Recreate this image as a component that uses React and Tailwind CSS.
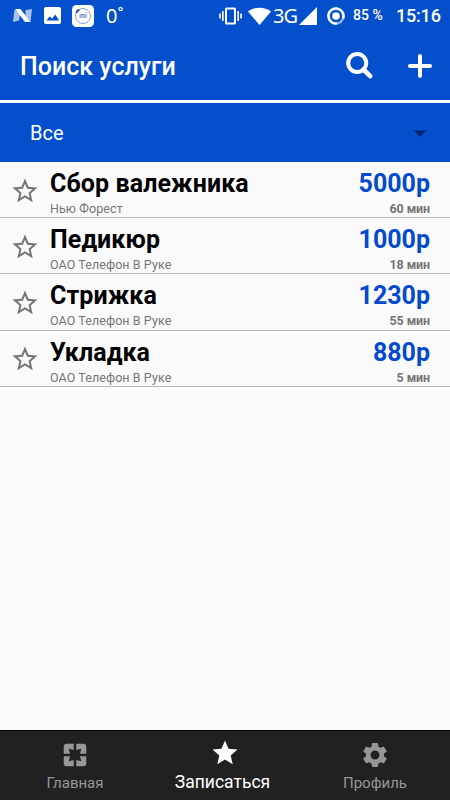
import React, { useState } from 'react';
import { MdPages, MdStar, MdStarBorder, MdSettings, MdArrowDropDown } from 'react-icons/md';

const services = [
    { id: 1, name: 'Сбор валежника', company: 'Нью Форест', price: 5000, duration: 60 },
    { id: 2, name: 'Педикюр', company: 'ОАО Телефон В Руке', price: 1000, duration: 18 },
    { id: 3, name: 'Стрижка', company: 'ОАО Телефон В Руке', price: 1230, duration: 55 },
    { id: 4, name: 'Укладка', company: 'ОАО Телефон В Руке', price: 880, duration: 5 },
];

const tabs = [
    { id: 'home', label: 'Главная', Icon: MdPages },
    { id: 'book', label: 'Записаться', Icon: MdStar },
    { id: 'profile', label: 'Профиль', Icon: MdSettings },
];

const StatusBar = () => (
    <div className="flex h-[31px] shrink-0 items-center pl-[13px] pr-[10px] text-white">
        <svg className="h-[15px] w-[19px]" viewBox="0 0 19 15">
            <path d="M0 14L1.500 1.500l5.500 5-1 6zM12.500 2.200l6.500-1.200-1.500 13-5-6z" fill="#a9c2ee" />
            <path d="M2 1h5.500l10 13H12z" fill="white" />
        </svg>
        <svg className="ml-3 h-[17px] w-[17px]" viewBox="0 0 17 17">
            <rect width="17" height="17" rx="2" fill="white" />
            <path d="M2.500 13.500l3.200-4.300 2.400 2.500 3.200-4.200 3.800 6z" fill="#044fcb" />
        </svg>
        <svg className="ml-[11px] h-[22px] w-[22px]" viewBox="0 0 22 22">
            <rect width="22" height="22" rx="4.5" fill="white" />
            <circle cx="11" cy="11" r="7.5" fill="none" stroke="#7f96d0" strokeWidth="0.9" />
            <path d="M4.200 7.800a7.500 7.500 0 0 1 3-3.200" fill="none" stroke="#1c3f9c" strokeWidth="1.8" />
            <text x="11" y="13.2" textAnchor="middle" fontSize="6.5" fontWeight="700" fill="#5a78c4">mi</text>
        </svg>
        <span className="ml-[12px] w-[20px] font-['Noto_Sans'] text-[20px] leading-[31px] text-white">0˚</span>

        <svg className="ml-auto h-[18px] w-[24px]" viewBox="0 0 24 18">
            <rect x="7" y="1.5" width="9" height="15" rx="0.5" fill="none" stroke="white" strokeWidth="2" />
            <path d="M1 6.500v5M3.800 4v10M19.200 4v10M22 6.500v5" stroke="white" strokeWidth="1.6" />
        </svg>
        <svg className="ml-[5px] h-[18px] w-[23px]" viewBox="0 0 23 18">
            <path d="M0 4.500C6.500-.500 16.500-.500 23 4.500L11.500 18z" fill="white" />
        </svg>
        <span className="ml-[2px] w-[26px] font-['Noto_Sans'] text-[20px] leading-[31px] tracking-[-1px]">3G</span>
        <svg className="h-[18px] w-[18px]" viewBox="0 0 18 18">
            <path d="M18 0v18H0z" fill="white" />
        </svg>
        <svg className="ml-[10px] h-[18px] w-[18px]" viewBox="0 0 18 18">
            <circle cx="9" cy="9" r="7.5" fill="none" stroke="#8fb0e8" strokeWidth="2.4" />
            <path d="M10 16.400A7.500 7.500 0 1 1 16 11.500" fill="none" stroke="white" strokeWidth="2.4" />
            <circle cx="9" cy="9" r="3.800" fill="white" />
        </svg>
        <span className="ml-[8px] w-[32px] whitespace-nowrap text-[14px] font-medium leading-[31px]">85 %</span>
        <span className="ml-[11px] w-[44px] whitespace-nowrap text-[18px] font-medium tracking-[-0.2px]">15:16</span>
    </div>
);

const Header = () => (
    <header className="flex h-[69px] shrink-0 items-center pl-5 pr-[17px] text-white">
        <h1 className="pt-[2px] text-[25px] font-medium leading-[30px]">Поиск услуги</h1>
        <button type="button" aria-label="Поиск" className="ml-auto">
            <svg className="h-7 w-7" viewBox="0 0 28 28" fill="none" stroke="white">
                <circle cx="11.200" cy="11" r="9" strokeWidth="4" />
                <path d="M17.500 17.500l6.700 6.700" strokeWidth="4.600" strokeLinecap="round" />
            </svg>
        </button>
        <button type="button" aria-label="Добавить" className="ml-[33px]">
            <svg className="h-[26px] w-[26px]" viewBox="0 0 26 26" stroke="white" strokeWidth="4" strokeLinecap="round">
                <path d="M13 3v20M3 13h20" />
            </svg>
        </button>
    </header>
);

const ServiceRow = ({ service, isFavorite, onToggle }) => (
    <li className="flex h-[56.25px] border-b border-[#b8b8b8]">
        <button type="button" aria-label="В избранное" className="flex w-[50px] items-center justify-center pt-[2px]" onClick={onToggle}>
            {isFavorite ? <MdStar size={30} color="#757575" /> : <MdStarBorder size={30} color="#757575" />}
        </button>
        <div className="flex flex-1 flex-col pt-[7px]">
            <span className="text-[25px] font-bold leading-[30px] tracking-[0.1px] text-black">{service.name}</span>
            <span className="text-[12.500px] leading-[19px] tracking-[0.08px] text-[#757575]">{service.company}</span>
        </div>
        <div className="flex flex-col items-end pr-5 pt-[7px]">
            <span className="text-[25px] font-bold leading-[30px] text-[#044acb]">{service.price}р</span>
            <span className="text-[12.500px] font-bold leading-[19px] tracking-[-0.1px] text-[#757575]">{service.duration} мин</span>
        </div>
    </li>
);

const App = () => {
    const [activeTab, setActiveTab] = useState('book');
    const [favorites, setFavorites] = useState([]);

    const toggleFavorite = (id) => {
        setFavorites(favorites.includes(id) ? favorites.filter((f) => f !== id) : [...favorites, id]);
    };

    return (
        <div className="flex h-[800px] w-[450px] flex-col overflow-hidden bg-[#fafafa] font-[Roboto,sans-serif]">
            <div className="flex shrink-0 flex-col bg-[#044fcb]">
                <StatusBar />
                <Header />
                <div className="h-[2.500px] bg-white" />
                <button type="button" className="flex h-[59px] items-center pl-[30px] pr-[15px] pt-px text-white">
                    <span className="pt-px text-[20px] leading-6">Все</span>
                    <MdArrowDropDown size={30} color="#03256a" className="ml-auto" />
                </button>
            </div>

            <ul className="flex-1 pt-[0.4px]">
                {services.map((service) => (
                    <ServiceRow
                        key={service.id}
                        service={service}
                        isFavorite={favorites.includes(service.id)}
                        onToggle={() => toggleFavorite(service.id)}
                    />
                ))}
            </ul>

            <nav className="grid h-[70px] shrink-0 grid-cols-3 border-t border-black bg-[#212121]">
                {tabs.map(({ id, label, Icon }) => {
                    const active = id === activeTab;
                    return (
                        <button
                            key={id}
                            type="button"
                            onClick={() => setActiveTab(id)}
                            className={`flex flex-col items-center ${active ? 'pt-[7px] text-white' : 'pt-[9px] text-[#979797]'}`}
                        >
                            <Icon size={30} />
                            <span className={active ? 'pr-[5px] text-[17.500px] leading-[28px]' : 'text-[15px] leading-[26px]'}>{label}</span>
                        </button>
                    );
                })}
            </nav>
        </div>
    );
};

export default App;
